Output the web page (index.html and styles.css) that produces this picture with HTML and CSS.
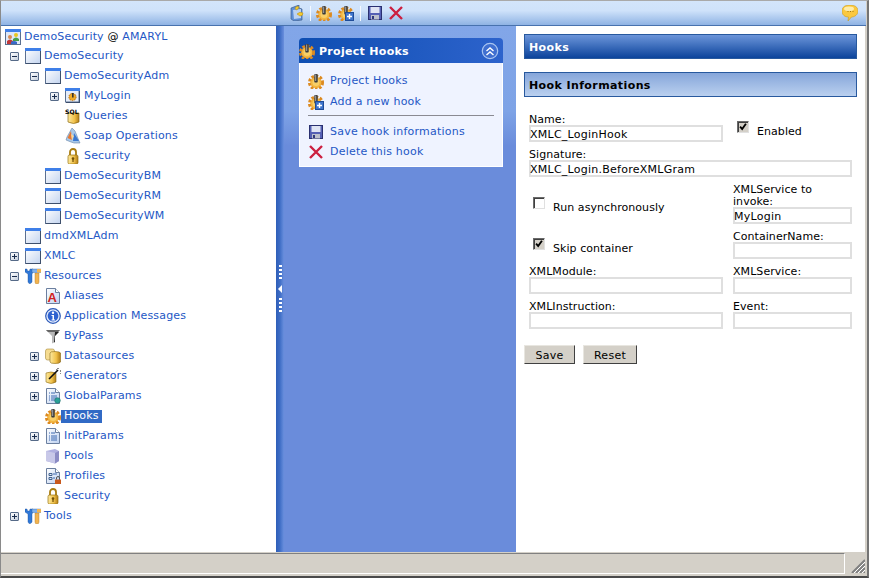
FILE: index.html
```html
<!DOCTYPE html>
<html lang="en">
<head>
<meta charset="utf-8">
<title>Project Hooks</title>
<link rel="stylesheet" href="styles.css">
</head>
<body>
<svg class="defs" width="0" height="0" aria-hidden="true">
  <defs>
    <linearGradient id="gw" x1="0" y1="0" x2="1" y2="1"><stop offset="0" stop-color="#fff"/><stop offset="1" stop-color="#c3d4f0"/></linearGradient>
    <linearGradient id="gy" x1="0" y1="0" x2="1" y2="0"><stop offset="0" stop-color="#fdeaa0"/><stop offset=".6" stop-color="#f0c048"/><stop offset="1" stop-color="#b07c18"/></linearGradient>
    <linearGradient id="gd" x1="0" y1="0" x2="1" y2="1"><stop offset="0" stop-color="#fff"/><stop offset="1" stop-color="#bcd0f0"/></linearGradient>
    <symbol id="i-window" viewBox="0 0 16 16"><rect x=".5" y=".5" width="15" height="15" fill="url(#gw)" stroke="#5a6f90"/><rect x="0" y="0" width="16" height="3" fill="#3f7fe8"/><path d="M1 15.500h15M15.500 3v13" stroke="#3d4f6c"/></symbol>
    <symbol id="i-app" viewBox="0 0 16 16"><rect x=".5" y=".5" width="15" height="15" fill="#dfe8f8" stroke="#5a6f90"/><rect width="16" height="3" fill="#3f7fe8"/><circle cx="5" cy="8" r="2" fill="#d88a50"/><path d="M2 15v-3q3-3 6 0v3z" fill="#c03838"/><circle cx="11" cy="6" r="2" fill="#e8c820"/><path d="M8 12v-2q3-3 6 0v2z" fill="#48a048"/><path d="M6 15v-2q3-2 6 0v2z" fill="#3868c8"/></symbol>
    <symbol id="i-module" viewBox="0 0 16 16"><rect x=".5" y=".5" width="13.500" height="13.500" fill="#e6edf9" stroke="#5a6f90"/><rect width="15" height="3" fill="#3f7fe8"/><path d="M1 14.500h14M14.500 3v12" stroke="#3d4f6c"/><circle cx="7.500" cy="9" r="3.600" fill="#eeaa28" stroke="#b86a10" stroke-dasharray="1.400 1"/><rect x="7" y="5" width="1.600" height="4.500" fill="#333"/></symbol>
    <symbol id="i-sql" viewBox="0 0 16 16"><path d="M3 5h11v9q-5.500 3-11 0z" fill="url(#gy)" stroke="#8c6a14" stroke-width=".7"/><text class="sql" x="0" y="5.500">SQL</text></symbol>
    <symbol id="i-soap" viewBox="0 0 16 16"><path d="M7 0l3 3 4 10 1 2H9L6 14 1 12l1-3z" fill="#a8c8e8" stroke="#6884a8" stroke-width=".6"/><path d="M6 3L2.500 10l4.500 2z" fill="#e87830"/><path d="M9 5l-1 8h6z" fill="#3a78d0"/><path d="M6 6l3 2-2 4z" fill="#f4d8a0"/></symbol>
    <symbol id="i-lock" viewBox="0 0 16 16"><path d="M5 8V4a3 3 0 0 1 6 0V8" fill="none" stroke="#a87c10" stroke-width="1.800"/><rect x="3" y="7" width="10" height="9" rx="1.500" fill="url(#gy)" stroke="#96700c" stroke-width=".7"/><circle cx="8" cy="10.500" r="1.300" fill="#6e4f08"/><rect x="7.400" y="11" width="1.200" height="3" fill="#6e4f08"/></symbol>
    <symbol id="i-tools" viewBox="0 0 16 16"><path d="M0 1h2l.5 2h2L5 1h3v3L7 6v8q-1 2-3 1.500L3 14V6L0 4z" fill="#2f78d8" stroke="#1d4e98" stroke-width=".4"/><path d="M10 5h4v9q0 2-2 2t-2-2z" fill="#f2b450" stroke="#a87020" stroke-width=".4"/><path d="M7 1h9v3.500H7z" fill="#7fb0ea" stroke="#2d62a8" stroke-width=".4"/><path d="M12 1h4v3.500h-4z" fill="#f2b450"/></symbol>
    <symbol id="i-alias" viewBox="0 0 16 16"><path d="M1.500.5h9l4 4v11h-13z" fill="url(#gd)" stroke="#6b7f9f"/><path d="M10.500.5v4h4" fill="#fff" stroke="#6b7f9f"/><text class="alias" x="2.500" y="14">A</text></symbol>
    <symbol id="i-info" viewBox="0 0 16 16"><circle cx="8" cy="8" r="7.300" fill="#e4ecfb" stroke="#2a58b8" stroke-width="1.200"/><circle cx="8" cy="8" r="5.400" fill="#2f62d0"/><circle cx="8" cy="4.800" r="1.200" fill="#fff"/><path d="M6.500 7h2.500v4.500h1v1H6.500v-1h1V8h-1z" fill="#fff"/></symbol>
    <symbol id="i-funnel" viewBox="0 0 16 16"><path d="M1 2h14L10 8v6l-3 1.500V8z" fill="#b8b8b8"/><path d="M1 2h14l-2 2H3z" fill="#666"/><path d="M10 4h4L10 8v6l-1 .5z" fill="#222"/></symbol>
    <symbol id="i-ds" viewBox="0 0 16 16"><rect x=".5" y="1" width="9" height="11" rx="2" fill="#f6dc90" stroke="#a88a38" stroke-width=".6"/><path d="M5 5q0-1.500 5-1.500t5.500 1.500v9q-1 1.500-5.500 1.500T5 14z" fill="url(#gy)" stroke="#8c6a14" stroke-width=".6"/></symbol>
    <symbol id="i-gen" viewBox="0 0 16 16"><path d="M1 5q5-2 10 0v9q-5 3-10 0z" fill="url(#gy)" stroke="#8c6a14" stroke-width=".6"/><path d="M4 11l9-9" stroke="#111" stroke-width="1.600"/><path d="M13 0v1M15 3h1M11 1l.5.5M15 5l.5.5" stroke="#111"/></symbol>
    <symbol id="i-doc" viewBox="0 0 16 16"><path d="M1.500.5h9l4 4v11h-13z" fill="url(#gd)" stroke="#6b7f9f"/><path d="M10.500.5v4h4" fill="#fff" stroke="#6b7f9f"/><path d="M4 5h1M6 5h4M4 8h1M6 8h6M4 10h1M6 10h6M4 12h1M6 12h6" stroke="#3c68b0"/></symbol>
    <symbol id="i-gp" viewBox="0 0 16 16"><use href="#i-doc"/><circle cx="12.500" cy="12.500" r="2.800" fill="#2aa098" stroke="#176860" stroke-width=".5"/></symbol>
    <symbol id="i-gear" viewBox="0 0 16 16"><circle cx="8" cy="9.500" r="5.800" fill="#f3b640"/><circle cx="8" cy="9.500" r="6.600" fill="none" stroke="#dc8a20" stroke-width="2.800" stroke-dasharray="2.700 1.650"/><circle cx="8" cy="9.500" r="3.500" fill="#f8cf68"/><rect x="6.300" y="1" width="3.400" height="8.500" rx=".8" fill="#3a3a3a"/><rect x="7.200" y="1.500" width="1" height="6.500" fill="#a8a8a8"/></symbol>
    <symbol id="i-pool" viewBox="0 0 16 16"><path d="M1 3l9-2 4 2v10l-4 2.500L1 13z" fill="#b0b0e0"/><path d="M1 3l9 2v10.500L1 13z" fill="#c8c8e8"/><path d="M10 5l4-2v10l-4 2.500z" fill="#8c8cc4"/></symbol>
    <symbol id="i-prof" viewBox="0 0 16 16"><path d="M1.500.5h9l4 4v11h-13z" fill="url(#gd)" stroke="#6b7f9f"/><path d="M10.500.5v4h4" fill="#fff" stroke="#6b7f9f"/><path d="M4 5.500h3v2H4zM4 9.500h3v2H4z" fill="none" stroke="#40608c"/><path d="M8 6h4M8 10h2" stroke="#3c68b0"/><rect x="10" y="11.500" width="6" height="4.500" fill="#c8581c"/><path d="M11.500 11.500v-1.500a1.500 1.500 0 0 1 3 0v1.500" fill="none" stroke="#555"/></symbol>
    <symbol id="i-gearadd" viewBox="0 0 16 16"><use href="#i-gear"/><rect x="7.500" y="7.500" width="8" height="8" fill="#3e74cc" stroke="#1f4c98"/><path d="M11.500 9v5M9 11.500h5" stroke="#fff" stroke-width="1.400"/></symbol>
    <symbol id="i-save" viewBox="0 0 16 16"><rect x="1.500" y="1.500" width="13" height="13" fill="#5560b4" stroke="#2a3070"/><rect x="3.500" y="2" width="9" height="6" fill="#dfe4f4"/><rect x="4" y="10" width="8" height="4.500" fill="#bcc0cc"/><rect x="5" y="11" width="2" height="3" fill="#30387c"/></symbol>
    <symbol id="i-del" viewBox="0 0 16 16"><path d="M2 2l12 12M14 2L2 14" stroke="#cc2040" stroke-width="2.400"/></symbol>
    <symbol id="i-note" viewBox="0 0 16 16"><path d="M2 3l8-3v3l3 1v11l-8 1-3-2z" fill="#5f8fd6" stroke="#33517e" stroke-width=".6"/><path d="M4 5l8-1v9l-7 1z" fill="#bcd2f2"/><path d="M6 3q2-3 4-1l-1 2-2 1zM8 9q3-3 6-1 0 3-3 3z" fill="#f4c92e" stroke="#b08810" stroke-width=".5"/></symbol>
    <symbol id="i-tip" viewBox="0 0 16 16"><path d="M8 0c4.800 0 8 2.200 8 6S12.500 12 9.500 12L6 16l.5-4C3 12 0 10 0 6S3.200 0 8 0z" fill="#fbc83e" stroke="#c89a20" stroke-width=".6"/><ellipse cx="7" cy="3.800" rx="5" ry="2.300" fill="#fdecaa"/><path d="M5.500 6.500h1M8 6.500h1M10.500 6.500h1" stroke="#a07818"/></symbol>
    <symbol id="i-up" viewBox="0 0 18 18"><circle cx="9" cy="9" r="7.700" fill="#3f6fd0" stroke="#a8c4f0" stroke-width="1.200"/><path d="M5.500 9l3.500-3 3.500 3M5.500 13l3.500-3 3.500 3" fill="none" stroke="#fff" stroke-width="1.400"/></symbol>
  </defs>
</svg>

<div class="window">
  <header class="toolbar">
    <svg class="ti"><use href="#i-note"/></svg>
    <span class="tsep"></span>
    <svg class="ti"><use href="#i-gear"/></svg>
    <svg class="ti wide"><use href="#i-gearadd"/></svg>
    <span class="tsep wide"></span>
    <svg class="ti wide"><use href="#i-save"/></svg>
    <svg class="ti"><use href="#i-del"/></svg>
    <svg class="ti tip"><use href="#i-tip"/></svg>
  </header>

  <main class="main">
    <nav class="tree">
      <div class="row root"><svg class="ic"><use href="#i-app"/></svg><span class="tx">DemoSecurity <b class="at">@</b> AMARYL</span></div>
      <div class="row l1 minus"><i class="ex"></i><svg class="ic"><use href="#i-window"/></svg><span class="tx">DemoSecurity</span></div>
      <div class="row l2 minus"><i class="ex"></i><svg class="ic"><use href="#i-window"/></svg><span class="tx">DemoSecurityAdm</span></div>
      <div class="row l3 plus"><i class="ex"></i><svg class="ic"><use href="#i-module"/></svg><span class="tx">MyLogin</span></div>
      <div class="row l3"><i class="ex none"></i><svg class="ic"><use href="#i-sql"/></svg><span class="tx">Queries</span></div>
      <div class="row l3"><i class="ex none"></i><svg class="ic"><use href="#i-soap"/></svg><span class="tx">Soap Operations</span></div>
      <div class="row l3"><i class="ex none"></i><svg class="ic"><use href="#i-lock"/></svg><span class="tx">Security</span></div>
      <div class="row l2"><i class="ex none"></i><svg class="ic"><use href="#i-window"/></svg><span class="tx">DemoSecurityBM</span></div>
      <div class="row l2"><i class="ex none"></i><svg class="ic"><use href="#i-window"/></svg><span class="tx">DemoSecurityRM</span></div>
      <div class="row l2"><i class="ex none"></i><svg class="ic"><use href="#i-window"/></svg><span class="tx">DemoSecurityWM</span></div>
      <div class="row l1"><i class="ex none"></i><svg class="ic"><use href="#i-window"/></svg><span class="tx">dmdXMLAdm</span></div>
      <div class="row l1 plus"><i class="ex"></i><svg class="ic"><use href="#i-window"/></svg><span class="tx">XMLC</span></div>
      <div class="row l1 minus"><i class="ex"></i><svg class="ic"><use href="#i-tools"/></svg><span class="tx">Resources</span></div>
      <div class="row l2"><i class="ex none"></i><svg class="ic"><use href="#i-alias"/></svg><span class="tx">Aliases</span></div>
      <div class="row l2"><i class="ex none"></i><svg class="ic"><use href="#i-info"/></svg><span class="tx">Application Messages</span></div>
      <div class="row l2"><i class="ex none"></i><svg class="ic"><use href="#i-funnel"/></svg><span class="tx">ByPass</span></div>
      <div class="row l2 plus"><i class="ex"></i><svg class="ic"><use href="#i-ds"/></svg><span class="tx">Datasources</span></div>
      <div class="row l2 plus"><i class="ex"></i><svg class="ic"><use href="#i-gen"/></svg><span class="tx">Generators</span></div>
      <div class="row l2 plus"><i class="ex"></i><svg class="ic"><use href="#i-gp"/></svg><span class="tx">GlobalParams</span></div>
      <div class="row l2 sel"><i class="ex none"></i><svg class="ic"><use href="#i-gear"/></svg><span class="tx">Hooks</span></div>
      <div class="row l2 plus"><i class="ex"></i><svg class="ic"><use href="#i-doc"/></svg><span class="tx">InitParams</span></div>
      <div class="row l2"><i class="ex none"></i><svg class="ic"><use href="#i-pool"/></svg><span class="tx">Pools</span></div>
      <div class="row l2"><i class="ex none"></i><svg class="ic"><use href="#i-prof"/></svg><span class="tx">Profiles</span></div>
      <div class="row l2"><i class="ex none"></i><svg class="ic"><use href="#i-lock"/></svg><span class="tx">Security</span></div>
      <div class="row l1 plus"><i class="ex"></i><svg class="ic"><use href="#i-tools"/></svg><span class="tx">Tools</span></div>
    </nav>

    <section class="tasks">
      <div class="splitter">
        <span class="grip"></span>
        <span class="arrow"></span>
        <span class="grip"></span>
      </div>
      <div class="tasks-body">
        <div class="card">
          <div class="card-head">
            <svg class="ic head-ic"><use href="#i-gear"/></svg>
            <span class="card-title">Project Hooks</span>
            <svg class="up"><use href="#i-up"/></svg>
          </div>
          <div class="card-list">
            <div class="task"><svg class="ic"><use href="#i-gear"/></svg><span>Project Hooks</span></div>
            <div class="task"><svg class="ic"><use href="#i-gearadd"/></svg><span>Add a new hook</span></div>
            <hr class="task-sep">
            <div class="task"><svg class="ic"><use href="#i-save"/></svg><span>Save hook informations</span></div>
            <div class="task"><svg class="ic"><use href="#i-del"/></svg><span>Delete this hook</span></div>
          </div>
        </div>
      </div>
    </section>

    <section class="content">
      <h1 class="bar dark">Hooks</h1>
      <h2 class="bar light">Hook Informations</h2>
      <form class="form">
        <div class="field"><label>Name:</label><input value="XMLC_LoginHook"></div>
        <div class="check-row top7"><span class="cb on"><svg viewBox="0 0 12 12"><path d="M2.500 5.500l2.500 3 4.500-6.500" fill="none" stroke="#000" stroke-width="2.200"/></svg></span><span>Enabled</span></div>
        <div class="field span"><label>Signature:</label><input value="XMLC_Login.BeforeXMLGram"></div>
        <div class="check-row top13 inset"><span class="cb"></span><span>Run asynchronously</span></div>
        <div class="field"><label class="two">XMLService to invoke:</label><input value="MyLogin"></div>
        <div class="check-row top7 inset"><span class="cb on"><svg viewBox="0 0 12 12"><path d="M2.500 5.500l2.500 3 4.500-6.500" fill="none" stroke="#000" stroke-width="2.200"/></svg></span><span>Skip container</span></div>
        <div class="field"><label>ContainerName:</label><input value=""></div>
        <div class="field"><label>XMLModule:</label><input value=""></div>
        <div class="field"><label>XMLService:</label><input value=""></div>
        <div class="field"><label>XMLInstruction:</label><input value=""></div>
        <div class="field"><label>Event:</label><input value=""></div>
      </form>
      <div class="buttons">
        <button type="button" class="btn save">Save</button>
        <button type="button" class="btn reset">Reset</button>
      </div>
    </section>
  </main>

  <footer class="status">
    <div class="status-main"></div>
    <div class="status-grip"><svg width="14" height="14" viewBox="0 0 14 14"><path d="M14 1L1 14M14 5L5 14M14 9L9 14M14 13l-1 1" stroke="#808080" stroke-width="2" fill="none"/><path d="M14 3L3 14M14 7L7 14M14 11l-3 3" stroke="#fff" fill="none"/></svg></div>
  </footer>
</div>
</body>
</html>
```
FILE: styles.css
```css
* { box-sizing: border-box; }
html, body { margin: 0; height: 100%; overflow: hidden; }
body { background: #d4d0c8; font: 11px/12px "DejaVu Sans", Verdana, sans-serif; color: #000; }
.defs { position: absolute; }
.sql { font: bold 6px "DejaVu Sans", sans-serif; fill: #000; }
.alias { font: bold 13px "Liberation Sans", sans-serif; fill: #d02020; }

.window { width: 869px; height: 578px; display: flex; flex-direction: column; border-left: 1px solid #8a8a8a; border-top: 1px solid #a9a9a9; border-right: 2px solid #747474; border-bottom: 2px solid #4a4a4a; }

.toolbar { height: 25px; flex: none; display: flex; align-items: center; padding: 0 8px 0 288px; gap: 5px; margin-right: 1px; background: linear-gradient(#d3e5fb 0, #cfe2fa 40%, #8fb3e4 100%); border-bottom: 1px solid #4872ae; }
.ti { width: 16px; height: 16px; flex: none; }
.ti.wide, .tsep.wide { margin-left: 1px; }
.tsep { width: 1px; height: 15px; background: #f4f9ff; flex: none; }
.tip { margin-left: auto; }

.main { flex: 1; min-height: 0; display: flex; background: #fff; border-right: 2px solid #d4d0c8; }

.tree { width: 275px; flex: none; padding: 1px 0 0 4px; color: #2457c5; letter-spacing: .16px; }
.row { height: 20px; display: flex; align-items: center; }
.root { height: 19px; }
.l2 { padding-left: 20px; }
.l3 { padding-left: 40px; }
.ex { width: 9px; height: 9px; margin: 0 6px 0 5px; flex: none; position: relative; border: 1px solid #566a88; border-radius: 1px; background: linear-gradient(135deg, #fff, #c4cedc); }
.ex.none { visibility: hidden; }
.minus .ex::before, .plus .ex::before { content: ""; position: absolute; left: 1px; top: 3px; width: 5px; height: 1px; background: #1a2c4c; }
.plus .ex::after { content: ""; position: absolute; left: 3px; top: 1px; width: 1px; height: 5px; background: #1a2c4c; }
.ic { width: 16px; height: 16px; flex: none; }
.tx { margin-left: 3px; padding: 0 1px 0 0; white-space: pre; }
.at { font-weight: normal; color: #000; }
.sel .tx { background: #316ac5; color: #fff; margin-left: 0; padding: 0 3px; height: 13px; line-height: 12px; }

.tasks { width: 240px; flex: none; display: flex; background: linear-gradient(#82a6e8 0, #7ea3e6 85px, #6a8cdb 120px, #6a8cdb 100%); }
.splitter { width: 8px; flex: none; display: flex; flex-direction: column; align-items: center; justify-content: center; gap: 5px; background: linear-gradient(90deg, #2e5eb8 0, #3f6ec6 50%, #6a8fdd 100%); }
.grip { width: 3px; height: 15px; background: repeating-linear-gradient(#fff 0 2px, transparent 2px 4px); }
.arrow { width: 0; height: 0; border: 4px solid transparent; border-right: 4px solid #fff; border-left: 0; }
.tasks-body { flex: 1; padding: 12px 13px 0 15px; }
.card { width: 204px; }
.card-head { height: 25px; display: flex; align-items: center; background: linear-gradient(90deg, #0e4eb2, #2d63cc); border-radius: 4px 4px 0 0; color: #fff; font-weight: bold; letter-spacing: .3px; }
.head-ic { margin-left: 0; }
.card-title { margin: 2px 0 0 4px; flex: 1; }
.up { width: 18px; height: 18px; margin-right: 4px; }
.card-list { background: #eff3ff; border: 1px solid #fff; border-top: 0; padding: 8px 8px 6px; height: 104px; color: #2457c5; letter-spacing: .22px; }
.task { height: 20px; display: flex; align-items: center; gap: 6px; }
.task-sep { margin: 3px 0 6px; border: 0; border-top: 1px solid #8a8a92; width: 186px; }
.task + .task { margin-top: 1px; }
.task-sep + .task + .task { margin-top: 0; }

.content { flex: 1; min-width: 0; padding: 8px 8px 0 8px; }
.bar { height: 25px; margin: 0; font: bold 11px/25px "DejaVu Sans", sans-serif; padding-left: 4px; border: 1px solid #28599e; letter-spacing: .4px; }
.bar.dark { color: #fff; background: linear-gradient(#6c95da, #0b439b); }
.bar.light { color: #000; margin-top: 13px; background: linear-gradient(#86a6da, #bad0ef); }

.form { margin: 17px 0 0 5px; display: grid; grid-template-columns: 194px 119px; column-gap: 10px; row-gap: 7px; letter-spacing: .06px; }
.field { display: flex; flex-direction: column; justify-content: flex-end; }
.field label { display: block; line-height: 11px; }
.field label.two { line-height: 11.500px; }
.field input { display: block; width: 100%; height: 17px; border: 1px solid #dfdfdf; box-shadow: inset 0 0 0 1px #dfdfdf; padding: 1px 0 0; font: 11px "DejaVu Sans", sans-serif; letter-spacing: .25px; color: #000; background: #fff; outline: 0; }
.span { grid-column: 1 / 3; }
.check-row { display: flex; align-items: flex-start; gap: 8px; }
.check-row > span:last-child { margin-top: 5px; }
.top7 { padding: 7px 0 0 4px; }
.top13 { padding: 13px 0 0 4px; }
.cb { width: 12px; height: 12px; flex: none; display: block; border: 1px solid; border-color: #6a6a6a #e0e0e0 #e0e0e0 #6a6a6a; background: #fff; box-shadow: inset 1px 1px 0 #404040; }
.cb.on { background: #d4d0c8; }
.cb svg { display: block; width: 10px; height: 10px; }

.buttons { display: flex; gap: 8px; margin-top: 16px; }
.btn { height: 19px; padding: 2px 0 0; font: 11px "DejaVu Sans", sans-serif; letter-spacing: .3px; color: #000; background: #d4d0c8; border: 1px solid; border-color: #e8e6e0 #404040 #404040 #e8e6e0; }
.save { width: 51px; }
.reset { width: 54px; }

.status { height: 24px; flex: none; display: flex; border-top: 1px solid #d4d0c8; margin-right: 2px; }
.status-main { flex: 1; border-top: 1px solid #808080; border-right: 1px solid #fff; border-bottom: 1px solid #fff; margin-bottom: 2px; }
.status-grip { width: 20px; flex: none; display: flex; align-items: flex-end; justify-content: flex-end; padding-bottom: 3px; }
```
